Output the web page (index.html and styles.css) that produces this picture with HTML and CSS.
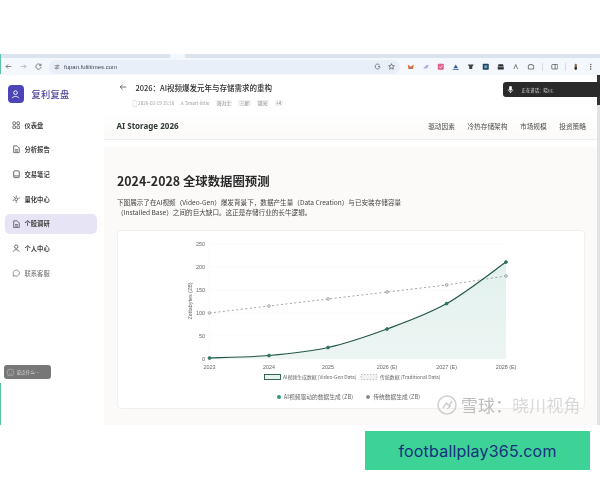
FILE: index.html
```html
<!DOCTYPE html>
<html lang="zh">
<head>
<meta charset="utf-8">
<title>AI Storage 2026</title>
<link rel="stylesheet" href="styles.css">
</head>
<body>
<div class="shot">
  <div class="tabstrip"></div>
  <div class="toolbar">
    <svg class="tb-ico" viewBox="0 0 10 10"><path d="M9 5H1.500M4.500 2 1.500 5l3 3" class="st"/></svg>
    <svg class="tb-ico faint" viewBox="0 0 10 10"><path d="M1 5h7.500M5.500 2l3 3-3 3" class="st"/></svg>
    <svg class="tb-ico" viewBox="0 0 10 10"><path d="M8.300 3.200A3.800 3.800 0 1 0 8.800 5.400M8.600 1v2.600H6" class="st"/></svg>
    <div class="omnibox">
      <svg class="tb-ico small" viewBox="0 0 10 10"><path d="M1 3h4M7 3h2M1 7h2M5 7h4" class="st"/><circle cx="6" cy="3" r="1.200" class="st"/><circle cx="4" cy="7" r="1.200" class="st"/></svg>
      <span class="url">fupan.fuliitimes.com</span>
      <span class="spring"></span>
      <svg class="tb-ico" viewBox="0 0 10 10"><path d="M8 3A3.500 3.500 0 1 0 8.500 6M5.500 5h3.300" class="st"/></svg>
      <svg class="tb-ico" viewBox="0 0 10 10"><path d="m5 1 1.200 2.700 2.900.3-2.200 1.900.7 2.900L5 7.300 2.400 8.800l.7-2.900L.9 4l2.900-.3z" class="st"/></svg>
    </div>
    <div class="exts">
      <svg class="ext" viewBox="0 0 10 10"><path d="M1 2l4 3 4-3-1 6H6L5 6 4 8H2z" fill="#d9683a"/><path d="M4 6.500h2L5 8z" fill="#33323a"/></svg>
      <svg class="ext" viewBox="0 0 10 10"><path d="M1.500 7.500 6 2.500l3 .5-2 4z" fill="#b6a8dc"/></svg>
      <svg class="ext" viewBox="0 0 10 10"><rect x="1" y="1" width="8" height="8" rx="1" fill="#e0628a"/><path d="m3 5 1.500 1.500L7 3.500" class="wh"/></svg>
      <svg class="ext" viewBox="0 0 10 10"><path d="M5 2 8 7H2z" fill="#2d5f96"/><path d="M1 8h8v1H1z" fill="#2d5f96"/></svg>
      <svg class="ext" viewBox="0 0 10 10"><path d="M1 2h8L7 5v3H3V5z" fill="#3c4048"/></svg>
      <svg class="ext" viewBox="0 0 10 10"><rect x="1" y="1" width="8" height="8" rx="1" fill="#24405a"/><rect x="3" y="3" width="4" height="4" fill="#6aa0c0"/></svg>
      <svg class="ext" viewBox="0 0 10 10"><path d="M2 1.500h6L9 5v3.500H1V5z" fill="#2b2f38"/><path d="M1 5h8" stroke="#eef" stroke-width=".8"/></svg>
      <svg class="ext" viewBox="0 0 10 10"><path d="M2.500 8 5 2l2.500 6" class="st"/></svg>
      <svg class="ext" viewBox="0 0 10 10"><path d="M3 2h4v1.200h1.800V8H1.800V3.200H3z" class="st"/></svg>
      <span class="sep"></span>
      <svg class="ext" viewBox="0 0 10 10"><rect x="1" y="2" width="8" height="6" rx="1" class="st"/><path d="M5.500 2v6" class="st"/></svg>
      <span class="sep tight"></span>
      <svg class="ext" viewBox="0 0 10 10"><rect x="3.500" y="1" width="3" height="8" rx="1.500" fill="#8a6a4c"/><rect x="3.500" y="5" width="3" height="4" rx="1.500" fill="#2b2b2b"/></svg>
      <svg class="ext" viewBox="0 0 10 10"><circle cx="5" cy="2" r=".9" fill="#444"/><circle cx="5" cy="5" r=".9" fill="#444"/><circle cx="5" cy="8" r=".9" fill="#444"/></svg>
    </div>
  </div>

  <div class="app">
    <aside class="sidebar">
      <div class="brand">
        <span class="brand-logo"><svg viewBox="0 0 12 12"><circle cx="6" cy="4" r="2" class="wh"/><path d="M2.500 10c.5-2.500 6.500-2.500 7 0" class="wh"/></svg></span>
        <span class="brand-name">复利复盘</span>
      </div>
      <nav class="menu">
        <a class="item"><svg viewBox="0 0 10 10"><rect x="1" y="1" width="3.200" height="3.200" rx=".8" class="st"/><rect x="5.800" y="1" width="3.200" height="3.200" rx=".8" class="st"/><rect x="1" y="5.800" width="3.200" height="3.200" rx=".8" class="st"/><rect x="5.800" y="5.800" width="3.200" height="3.200" rx=".8" class="st"/></svg>仪表盘</a>
        <a class="item"><svg viewBox="0 0 10 10"><path d="M2 1h4l2.500 2.500V9H2zM3.500 5.500h3.500M3.500 7.200h3.500" class="st"/></svg>分析报告</a>
        <a class="item"><svg viewBox="0 0 10 10"><rect x="2" y="1" width="6.500" height="8" rx="1" class="st"/><path d="M2 7h6.500" class="st"/></svg>交易笔记</a>
        <a class="item"><svg viewBox="0 0 10 10"><circle cx="5" cy="5" r="1.600" class="st"/><path d="M5 .8v1.600M5 7.600v1.600M.8 6.500l1.700-.7M7.500 4l1.700-.7M2 2l1.500 1.600" class="st"/></svg>量化中心</a>
        <a class="item active"><svg viewBox="0 0 10 10"><path d="M2 1h4l2.500 2.500V9H2zM3.500 5.500h3.500M3.500 7.200h3.500" class="st"/></svg>个股调研</a>
        <a class="item"><svg viewBox="0 0 10 10"><circle cx="5" cy="3.200" r="2" class="st"/><path d="M1.500 9c.5-3 6.500-3 7 0" class="st"/></svg>个人中心</a>
        <a class="item muted"><svg viewBox="0 0 10 10"><path d="M5 1.200a3.800 3.600 0 1 1-2 6.700L1.200 8.600 2 6.800A3.800 3.600 0 0 1 5 1.200z" class="st"/></svg>联系客服</a>
      </nav>
    </aside>

    <main class="main">
      <header class="head">
        <div class="title-row">
          <svg class="back" viewBox="0 0 10 10"><path d="M9 5H1.500M4.500 2 1.500 5l3 3" class="st"/></svg>
          <span class="title">2026：AI视频爆发元年与存储需求的重构</span>
        </div>
        <div class="meta">
          <span>▢ 2026-02-19 15:10</span>
          <span>♙ Smart-little</span>
          <span class="tag">海力士</span><span class="tag">三星</span><span class="tag">镁光</span><span class="tag">+4</span>
        </div>
      </header>
      <div class="subnav">
        <strong class="sub-brand">AI Storage 2026</strong>
        <div class="sub-links">
          <span>驱动因素</span><span>冷热存储架构</span><span>市场规模</span><span>投资策略</span>
        </div>
      </div>
      <section class="content">
        <h2 class="heading">2024-2028 全球数据圈预测</h2>
        <p class="lead">下图展示了在AI视频（Video-Gen）爆发背景下，数据产生量（Data Creation）与已安装存储容量<br>（Installed Base）之间的巨大缺口。这正是存储行业的长牛逻辑。</p>
        <div class="card">
          <svg class="chart" viewBox="118 231 466 150">
            <defs>
              <linearGradient id="fillg" x1="0" y1="0" x2="0" y2="1">
                <stop offset="0" stop-color="#e1f1ed"/>
                <stop offset="1" stop-color="#edf5f3"/>
              </linearGradient>
            </defs>
            <g class="grid">
              <path d="M209.500 244H506M209.500 267H506M209.500 290H506M209.500 313H506M209.500 336H506M209.500 359H506M209.500 244V359"/>
            </g>
            <path fill="url(#fillg)" d="M209.500 358C219.400 357.600 249.250 357.250 269 355.500C288.750 353.750 308.300 351.900 328 347.500C347.670 343.100 367.200 336.300 387 329C406.800 321.700 426.800 314.800 446.600 303.600C466.400 292.400 496.100 268.900 506 262V359H209.500Z"/>
            <path class="trad" d="M209.500 313 269 306 328 299 387 292 446.600 285 506 276"/>
            <g class="trad-dots">
              <circle cx="209.500" cy="313" r="1.400"/><circle cx="269" cy="306" r="1.400"/><circle cx="328" cy="299" r="1.400"/><circle cx="387" cy="292" r="1.400"/><circle cx="446.600" cy="285" r="1.400"/><circle cx="506" cy="276" r="1.400"/>
            </g>
            <path class="ai" d="M209.500 358C219.400 357.600 249.250 357.250 269 355.500C288.750 353.750 308.300 351.900 328 347.500C347.670 343.100 367.200 336.300 387 329C406.800 321.700 426.800 314.800 446.600 303.600C466.400 292.400 496.100 268.900 506 262"/>
            <g class="ai-dots">
              <circle cx="209.500" cy="358" r="1.500"/><circle cx="269" cy="355.500" r="1.500"/><circle cx="328" cy="347.500" r="1.500"/><circle cx="387" cy="329" r="1.500"/><circle cx="446.600" cy="303.600" r="1.500"/><circle cx="506" cy="262" r="1.500"/>
            </g>
            <g class="ticks ytick">
              <text x="205" y="246">250</text><text x="205" y="269">200</text><text x="205" y="292">150</text><text x="205" y="315">100</text><text x="205" y="338">50</text><text x="205" y="361">0</text>
            </g>
            <g class="ticks xtick">
              <text x="209.500" y="368.500">2023</text><text x="269" y="368.500">2024</text><text x="328" y="368.500">2025</text><text x="387" y="368.500">2026 (E)</text><text x="446.600" y="368.500">2027 (E)</text><text x="506" y="368.500">2028 (E)</text>
            </g>
            <text class="axis-title" transform="translate(192 301) rotate(-90)">Zettabytes (ZB)</text>
            <rect class="lg-ai" x="264.500" y="374.500" width="16" height="5"/>
            <text class="lg-text" x="283" y="379">AI视频生成数据 (Video-Gen Data)</text>
            <rect class="lg-trad" x="361" y="374.500" width="16" height="5"/>
            <text class="lg-text" x="380" y="379">传统数据 (Traditional Data)</text>
          </svg>
          <div class="keys">
            <span class="key"><i class="dot teal"></i>AI视频驱动的数据生成 (ZB)</span>
            <span class="key"><i class="dot gray"></i>传统数据生成 (ZB)</span>
          </div>
        </div>
      </section>
    </main>
    <div class="scrollbar"></div>
  </div>

  <div class="speaking">
    <svg viewBox="0 0 10 10"><rect x="3.500" y="1" width="3" height="5.500" rx="1.500" fill="#fff"/><path d="M2.500 5c0 3.500 5 3.500 5 0M5 7.500V9" stroke="#fff" stroke-width=".8" fill="none"/></svg>
    <span>正在讲话：晓川;</span>
  </div>
  <div class="ask">
    <svg viewBox="0 0 10 10"><circle cx="5" cy="5" r="3.800" fill="none" stroke="#bbb" stroke-width=".7"/><circle cx="3.800" cy="4.200" r=".4" fill="#bbb"/><circle cx="6.200" cy="4.200" r=".4" fill="#bbb"/><path d="M3.400 6c.8 1 2.400 1 3.200 0" fill="none" stroke="#bbb" stroke-width=".6"/></svg>
    <span>说点什么…</span>
  </div>
  <div class="watermark">
    <svg viewBox="0 0 20 20"><circle cx="10" cy="10" r="9" fill="none" stroke="#cfcfcf" stroke-width="1.500"/><path d="M6 13 9.500 8 12 11 15 6M10 14l4-3" fill="none" stroke="#cfcfcf" stroke-width="1.500"/></svg>
    <span><b class="wm-strong">雪球：</b>晓川视角</span>
  </div>
</div>
<div class="footer">
  <a class="promo">footballplay365.com</a>
</div>
</body>
</html>
```

FILE: styles.css
```css
* { box-sizing: border-box; }
html, body { margin: 0; padding: 0; background: #fff; }
body {
  width: 600px;
  height: 480px;
  overflow: hidden;
  padding-top: 54px;
  font-family: "Noto Sans CJK SC", "Noto Sans", sans-serif;
  color: #333;
}
.st { fill: none; stroke: #444; stroke-width: .9; }
.wh { fill: none; stroke: #fff; stroke-width: 1; }

.shot {
  position: relative;
  height: 371px;
  width: 600px;
  overflow: hidden;
  filter: blur(.35px);
  border-left: 1.500px solid transparent;
  border-image: linear-gradient(#5bc4a6 21px, transparent 21px, transparent 328px, #5bc4a6 328px) 1;
  background: #fff;
}
.tabstrip { height: 4px; background: linear-gradient(90deg, #dbe3ef 168px, #f4f7fc 170px, #f4f7fc 183px, #dbe3ef 185px); }
.toolbar {
  height: 17px;
  display: flex;
  align-items: center;
  gap: 8px;
  padding-left: 4px;
  background: #f4f7fc;
}
.tb-ico { width: 7px; height: 7px; flex: none; }
.tb-ico.faint { opacity: .5; }
.tb-ico.small { width: 6px; height: 6px; }
.omnibox {
  width: 351px;
  height: 14px;
  margin-left: -1px;
  padding: 0 5px 0 5px;
  border-radius: 7px;
  background: #e9eff8;
  display: flex;
  align-items: center;
  gap: 7px;
}
.url { font: 500 6px "Liberation Sans", sans-serif; color: #3c4858; margin-left: -3px; }
.spring { flex: 1; }
.exts { display: flex; align-items: center; gap: 7.500px; margin-left: -1px; }
.ext { width: 7.500px; height: 7.500px; flex: none; }
.sep { width: 1px; height: 8px; background: #d5d9e0; }
.sep.tight { margin: 0 -1px; }

.app { height: 350px; display: flex; }
.sidebar { width: 102.500px; flex: none; background: #fff; padding: 10px 0 0 6.500px; }
.brand { display: flex; align-items: center; gap: 8px; }
.brand-logo {
  width: 16px; height: 18px;
  border-radius: 4px;
  background: #4d44b5;
  display: flex; align-items: center; justify-content: center;
}
.brand-logo svg { width: 11px; height: 11px; }
.brand-name { font-size: 9.200px; font-weight: 500; color: #4c4599; letter-spacing: .35px; }
.menu { display: flex; flex-direction: column; gap: 4.700px; margin-top: 12px; margin-left: -3px; width: 92px; }
.item {
  height: 20px;
  display: flex;
  align-items: center;
  gap: 4.500px;
  padding-left: 7px;
  border-radius: 5px;
  font-size: 6.300px;
  font-weight: 700;
  color: #3f3f3f;
}
.item svg { width: 8.500px; height: 8.500px; flex: none; }
.item.active { background: #e7e4f6; }
.item.muted { color: #808080; font-weight: 500; }
.item.muted .st { stroke: #777; }

.main { flex: 1; min-width: 0; display: flex; flex-direction: column; }
.head { height: 37px; background: #fff; padding: 6px 0 0 15px; }
.title-row { display: flex; align-items: center; gap: 9px; height: 12px; }
.back { width: 8px; height: 8px; flex: none; }
.title { font-size: 7.500px; font-weight: 500; color: #2e2e2e; white-space: nowrap; }
.meta {
  display: flex; align-items: center;
  margin: 7px 0 0 14px;
  font-size: 4.600px;
  color: #9a9a9a;
  gap: 6px;
  white-space: nowrap;
}
.tag { background: #f2f2f2; color: #888; padding: 0 1.500px; border-radius: 1px; }
.subnav {
  height: 28px;
  padding: 0 11px 0 13px;
  display: flex; align-items: center; justify-content: space-between;
  background: linear-gradient(#fff, #fbfaf8);
  border-bottom: 1px solid #eeeded;
}
.sub-brand { font: 700 8px "Noto Sans", sans-serif; color: #2e3a36; }
.sub-links { display: flex; gap: 12.500px; font-size: 6.700px; color: #4a4a4a; }
.content { flex: 1; background: linear-gradient(#fff 6px, #fbfaf8 8px); padding: 32px 12px 0 13.500px; }
.heading { margin: 0; font-size: 12.400px; font-weight: 700; line-height: 18px; color: #2a2a2a; white-space: nowrap; }
.lead { margin: 7px 0 0; font-size: 6.600px; line-height: 10px; color: #444; white-space: nowrap; }
.card {
  margin-top: 13px;
  margin-left: -.5px;
  width: 468px;
  height: 179px;
  background: #fff;
  border: 1px solid #f0efed;
  border-radius: 4px;
  overflow: hidden;
}
.chart { display: block; width: 466px; height: 150px; }
.grid path { fill: none; stroke: #f6f6f6; stroke-width: .6; }
.trad { fill: none; stroke: #9b9b9b; stroke-width: .9; stroke-dasharray: 2 2.500; }
.trad-dots circle { fill: #e2e2e2; stroke: #888; stroke-width: .6; }
.ai { fill: none; stroke: #24574a; stroke-width: 1.200; }
.ai-dots circle { fill: #25806a; stroke: #24574a; stroke-width: .6; }
.ticks text { font: 5.400px "Liberation Sans", sans-serif; fill: #666; }
.ytick text { text-anchor: end; }
.xtick text { text-anchor: middle; }
.axis-title { font: 5.400px "Liberation Sans", sans-serif; fill: #666; text-anchor: middle; }
.lg-ai { fill: #e4f1ee; stroke: #24574a; stroke-width: .9; }
.lg-trad { fill: #f2f2f2; stroke: #aaa; stroke-width: .7; stroke-dasharray: 1.500 1.500; }
.lg-text { font: 4.900px "Noto Sans CJK SC", sans-serif; fill: #666; }
.keys { display: flex; justify-content: center; gap: 13px; margin-top: 11px; padding-right: 4px; font-size: 5.750px; color: #666; }
.key { display: flex; align-items: center; gap: 3px; white-space: nowrap; }
.dot { width: 4px; height: 4px; border-radius: 50%; }
.dot.teal { background: #2c9a7c; }
.dot.gray { background: #8e8e8e; }
.scrollbar { width: 3px; flex: none; background: linear-gradient(#333 30px, #e2e2e2 30px); }

.speaking {
  position: absolute; left: 501.500px; top: 28px;
  width: 97px; height: 15px;
  border-radius: 3px;
  background: #2a2a2a;
  display: flex; align-items: center; gap: 7px;
  padding-left: 3px;
  font-size: 4.400px; color: #ddd;
}
.speaking svg { width: 9px; height: 9px; }
.ask {
  position: absolute; left: 2.500px; top: 311px;
  width: 47px; height: 14px;
  border-radius: 3px;
  background: #777;
  display: flex; align-items: center; gap: 2px;
  padding-left: 2px;
  font-size: 4.600px; color: #ddd;
}
.ask svg { width: 9px; height: 9px; }
.watermark {
  position: absolute; left: 435.500px; top: 339px;
  display: flex; align-items: center; gap: 4.500px;
  font-size: 16.800px; color: #d8d8d8;
  letter-spacing: .3px;
  white-space: nowrap;
}
.watermark svg { width: 20px; height: 20px; }
.wm-strong { font-weight: 400; color: #bdbdbd; }

.footer { padding: 6px 0 0 365px; }
.promo {
  display: flex; align-items: center; justify-content: center;
  width: 225px; height: 39px;
  background: #3dd296;
  color: #17307e;
  font: 400 16px "Inter", sans-serif;
  letter-spacing: .2px;
}
```
